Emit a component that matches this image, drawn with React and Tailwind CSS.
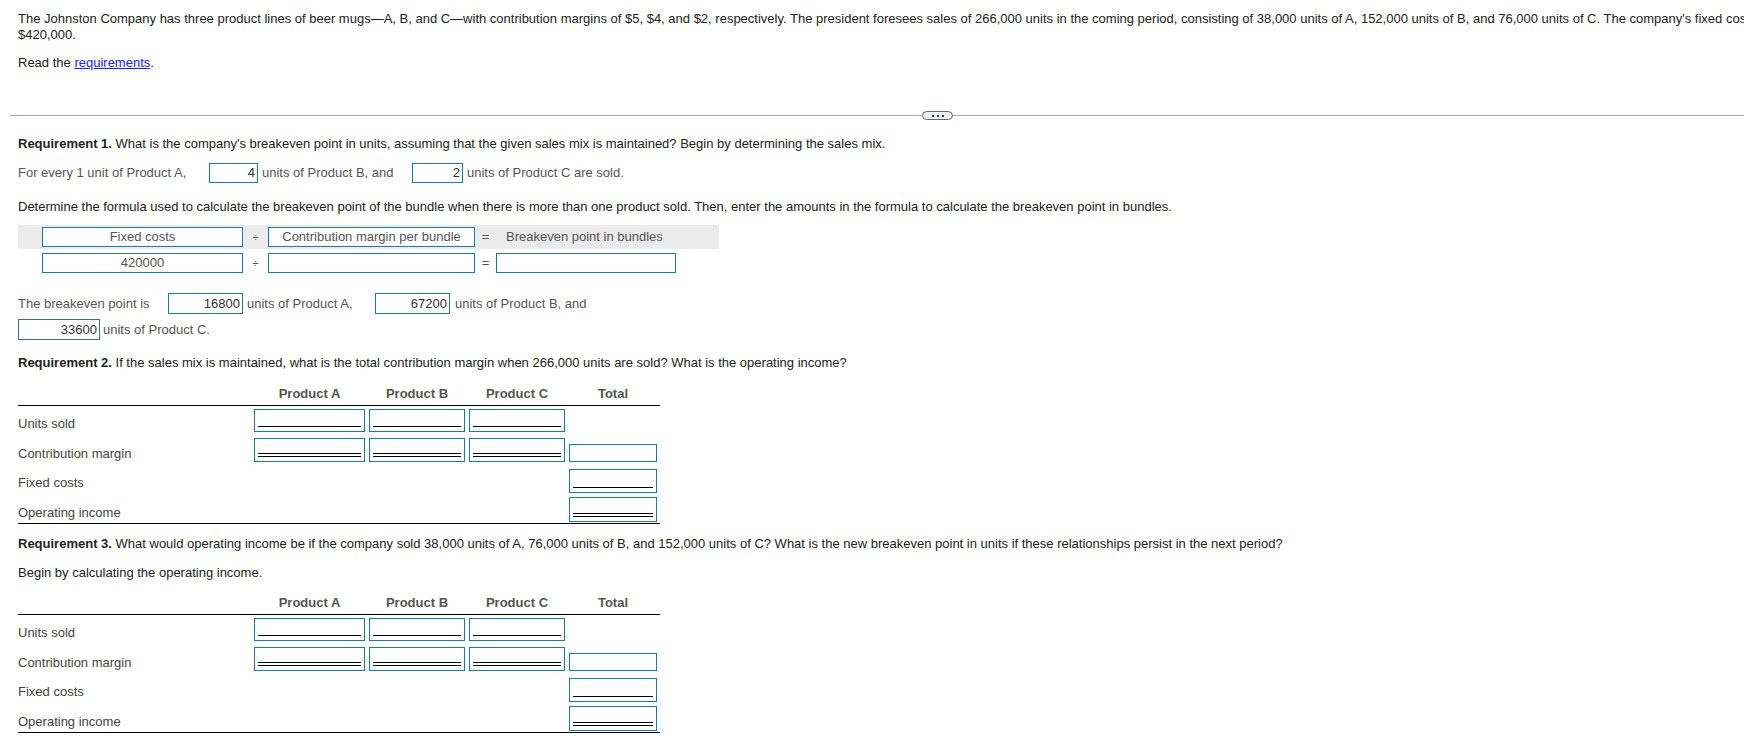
import React from 'react';

// filled / empty answer box
function Entry({ className = '', children }) {
  return (
    <div className={`flex h-full items-center border bg-white text-[13px] leading-[16px] ${className}`}>
      {children}
    </div>
  );
}

// table cell box with accounting underline(s)
function Cell({ className = '', line = 'none' }) {
  return (
    <div className={`flex flex-col justify-end border border-[#1b7d98] bg-white px-[3px] pb-[4px] ${className}`}>
      {line === 'single' && <div className="w-full border-b border-black" />}
      {line === 'double' && <div className="h-[4px] w-full border-y border-black" />}
    </div>
  );
}

function SummaryTable() {
  const heads = [
    { label: 'Product A', w: 'w-[111px]' },
    { label: 'Product B', w: 'w-[96px]' },
    { label: 'Product C', w: 'w-[96px]' },
    { label: 'Total', w: 'w-[88px]' },
  ];

  return (
    <div className="w-[642px] text-[13px] leading-[16px]">
      {/* header */}
      <div className="flex h-[24px] gap-[4px] border-b border-black">
        <div className="w-[232px]" />
        {heads.map((h) => (
          <div key={h.label} className={`${h.w} self-end pb-[3px] text-center font-bold text-[#555]`}>
            {h.label}
          </div>
        ))}
      </div>

      {/* units sold */}
      <div className="flex h-[29px] items-start gap-[4px]">
        <div className="w-[232px] self-end pb-[3px] text-[#444]">Units sold</div>
        <Cell className="mt-[3px] h-[23px] w-[111px]" line="single" />
        <Cell className="mt-[3px] h-[23px] w-[96px]" line="single" />
        <Cell className="mt-[3px] h-[23px] w-[96px]" line="single" />
      </div>

      {/* contribution margin */}
      <div className="flex h-[30px] items-start gap-[4px]">
        <div className="w-[232px] self-end pb-[3px] text-[#444]">Contribution margin</div>
        <Cell className="mt-[3px] h-[24px] w-[111px]" line="double" />
        <Cell className="mt-[3px] h-[24px] w-[96px]" line="double" />
        <Cell className="mt-[3px] h-[24px] w-[96px]" line="double" />
        <Cell className="mt-[9px] h-[18px] w-[88px]" />
      </div>

      {/* fixed costs */}
      <div className="flex h-[29px] items-start gap-[4px]">
        <div className="w-[232px] self-end pb-[3px] text-[#444]">Fixed costs</div>
        <div className="w-[111px]" />
        <div className="w-[96px]" />
        <div className="w-[96px]" />
        <Cell className="mt-[4px] h-[24px] w-[88px]" line="single" />
      </div>

      {/* operating income */}
      <div className="flex h-[30px] items-start gap-[4px] border-b border-black">
        <div className="w-[232px] self-end pb-[2px] text-[#444]">Operating income</div>
        <div className="w-[111px]" />
        <div className="w-[96px]" />
        <div className="w-[96px]" />
        <Cell className="mt-[3px] h-[25px] w-[88px]" line="double" />
      </div>
    </div>
  );
}

export default function App() {
  return (
    <div className="min-h-screen w-full overflow-hidden bg-white font-['Liberation_Sans',Arial,sans-serif] text-[13px] leading-[16px] text-[#222]">
      {/* problem statement */}
      <div className="pl-[18px] pt-[11px]">
        <p className="whitespace-nowrap">
          The Johnston Company has three product lines of beer mugs—A, B, and C—with contribution margins of $5, $4, and $2,
          respectively. The president foresees sales of 266,000 units in the coming period, consisting of 38,000 units of A,
          152,000 units of B, and 76,000 units of C. The company&apos;s fixed costs are
        </p>
        <p>$420,000.</p>
        <p className="mt-[12px]">
          Read the{' '}
          <a href="#" className="text-[#2222ee] underline">
            requirements
          </a>
          .
        </p>
      </div>

      {/* divider */}
      <div className="ml-[10px] mt-[40px] flex h-[9px] items-center">
        <div className="h-px w-[912px] bg-[#bf9cb1]" />
        <div className="flex h-[9px] w-[31px] items-center justify-center gap-[3px] rounded-full border border-[#5f6b7a] bg-[#eef1f4]">
          <span className="h-[2px] w-[2px] bg-[#39414d]" />
          <span className="h-[2px] w-[2px] bg-[#39414d]" />
          <span className="h-[2px] w-[2px] bg-[#39414d]" />
        </div>
        <div className="h-px flex-1 bg-[#bf9cb1]" />
      </div>

      <div className="pl-[18px]">
        {/* requirement 1 */}
        <p className="mt-[16px]">
          <span className="font-bold">Requirement 1.</span> What is the company&apos;s breakeven point in units, assuming
          that the given sales mix is maintained? Begin by determining the sales mix.
        </p>

        <div className="mt-[11px] flex h-[20px] items-center text-[#555]">
          <span className="w-[191px]">For every 1 unit of Product A,</span>
          <Entry className="w-[49px] justify-end border-[#1b7d98] pr-[2px] text-[#333]">4</Entry>
          <span className="ml-[4px] w-[150px]">units of Product B, and</span>
          <Entry className="w-[51px] justify-end border-[#1b7d98] pr-[2px] text-[#333]">2</Entry>
          <span className="ml-[4px]">units of Product C are sold.</span>
        </div>

        <p className="mt-[16px]">
          Determine the formula used to calculate the breakeven point of the bundle when there is more than one product sold.
          Then, enter the amounts in the formula to calculate the breakeven point in bundles.
        </p>

        <div className="mt-[10px] flex h-[24px] w-[701px] items-center bg-[#ebebeb] pl-[24px] text-[#555]">
          <div className="h-[20px] w-[201px]">
            <Entry className="justify-center border-[#1b7d98]">Fixed costs</Entry>
          </div>
          <span className="w-[25px] text-center text-[11px]">÷</span>
          <div className="h-[20px] w-[207px]">
            <Entry className="justify-center border-[#1b7d98]">Contribution margin per bundle</Entry>
          </div>
          <span className="w-[21px] text-center">=</span>
          <span className="w-[180px] pl-[10px]">Breakeven point in bundles</span>
        </div>

        <div className="mt-[4px] flex h-[20px] items-center pl-[24px] text-[#555]">
          <div className="h-[20px] w-[201px]">
            <Entry className="justify-center border-[#1b7d98]">420000</Entry>
          </div>
          <span className="w-[25px] text-center text-[11px]">÷</span>
          <div className="h-[20px] w-[207px]">
            <Entry className="border-[#1b7d98]" />
          </div>
          <span className="w-[21px] text-center">=</span>
          <div className="h-[20px] w-[180px]">
            <Entry className="border-[#1b7d98]" />
          </div>
        </div>

        <div className="mt-[20px] flex h-[21px] items-center text-[#555]">
          <span className="w-[150px]">The breakeven point is</span>
          <Entry className="w-[75px] justify-end border-[#1b7d98] pr-[2px] text-[#333]">16800</Entry>
          <span className="ml-[4px] w-[128px]">units of Product A,</span>
          <Entry className="w-[75px] justify-end border-[#1b7d98] pr-[2px] text-[#333]">67200</Entry>
          <span className="ml-[5px]">units of Product B, and</span>
        </div>
        <div className="mt-[5px] flex h-[21px] items-center text-[#555]">
          <Entry className="w-[82px] justify-end border-[#3a63c8] pr-[2px] text-[#333]">33600</Entry>
          <span className="ml-[3px]">units of Product C.</span>
        </div>

        {/* requirement 2 */}
        <p className="mt-[15px]">
          <span className="font-bold">Requirement 2.</span> If the sales mix is maintained, what is the total contribution
          margin when 266,000 units are sold? What is the operating income?
        </p>
        <div className="mt-[11px]">
          <SummaryTable />
        </div>

        {/* requirement 3 */}
        <p className="mt-[12px]">
          <span className="font-bold">Requirement 3.</span> What would operating income be if the company sold 38,000 units
          of A, 76,000 units of B, and 152,000 units of C? What is the new breakeven point in units if these relationships
          persist in the next period?
        </p>
        <p className="mt-[13px]">Begin by calculating the operating income.</p>
        <div className="mt-[10px]">
          <SummaryTable />
        </div>
      </div>
    </div>
  );
}
